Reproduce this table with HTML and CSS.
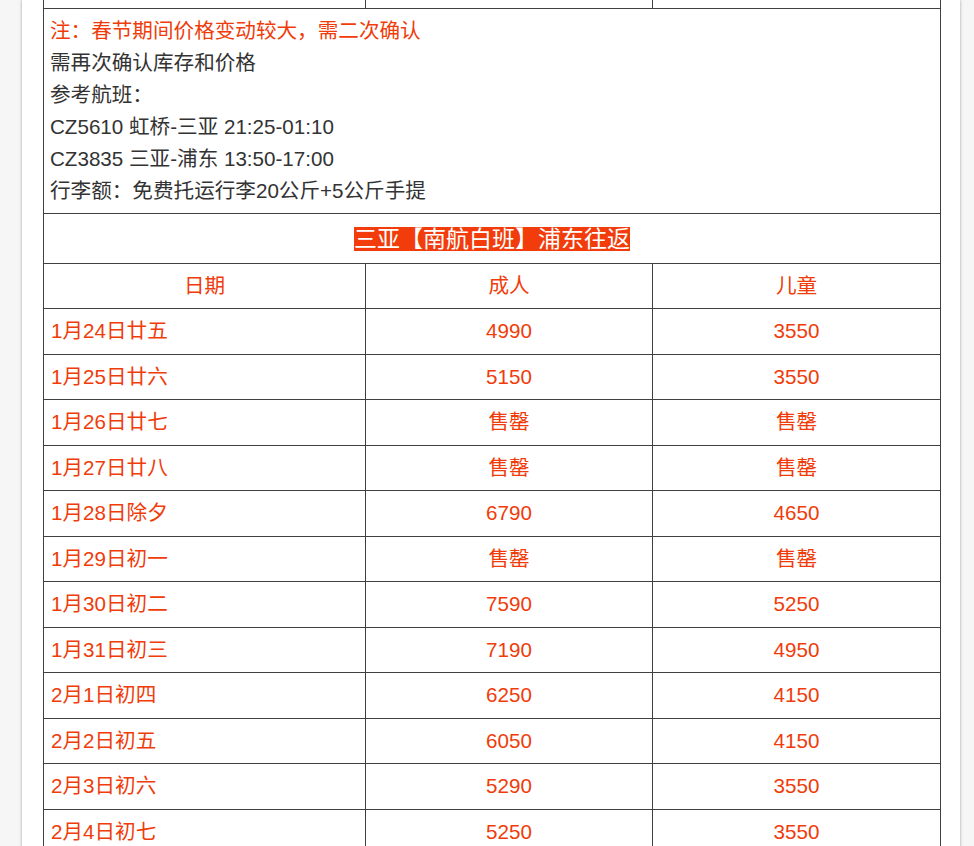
FILE: index.html
```html
<!DOCTYPE html>
<html lang="zh-CN">
<head>
<meta charset="utf-8">
<title>三亚【南航白班】浦东往返</title>
<link rel="stylesheet" href="styles.css">
</head>
<body>
<div class="page">
  <table class="price">
    <colgroup>
      <col class="c1"><col class="c2"><col class="c3">
    </colgroup>
    <tbody>
      <tr class="cut"><td></td><td></td><td></td></tr>
      <tr>
        <td colspan="3" class="notes">
          <div class="red">注：春节期间价格变动较大，需二次确认</div>
          <div>需再次确认库存和价格</div>
          <div>参考航班：</div>
          <div>CZ5610 虹桥-三亚 21:25-01:10</div>
          <div>CZ3835 三亚-浦东 13:50-17:00</div>
          <div>行李额：免费托运行李20公斤+5公斤手提</div>
        </td>
      </tr>
      <tr class="title-row">
        <td colspan="3"><span class="title">三亚【南航白班】浦东往返</span></td>
      </tr>
      <tr class="row head">
        <td class="ctr">日期</td><td class="ctr">成人</td><td class="ctr">儿童</td>
      </tr>
      <tr class="row"><td>1月24日廿五</td><td class="ctr">4990</td><td class="ctr">3550</td></tr>
      <tr class="row"><td>1月25日廿六</td><td class="ctr">5150</td><td class="ctr">3550</td></tr>
      <tr class="row"><td>1月26日廿七</td><td class="ctr">售罄</td><td class="ctr">售罄</td></tr>
      <tr class="row"><td>1月27日廿八</td><td class="ctr">售罄</td><td class="ctr">售罄</td></tr>
      <tr class="row"><td>1月28日除夕</td><td class="ctr">6790</td><td class="ctr">4650</td></tr>
      <tr class="row"><td>1月29日初一</td><td class="ctr">售罄</td><td class="ctr">售罄</td></tr>
      <tr class="row"><td>1月30日初二</td><td class="ctr">7590</td><td class="ctr">5250</td></tr>
      <tr class="row"><td>1月31日初三</td><td class="ctr">7190</td><td class="ctr">4950</td></tr>
      <tr class="row"><td>2月1日初四</td><td class="ctr">6250</td><td class="ctr">4150</td></tr>
      <tr class="row"><td>2月2日初五</td><td class="ctr">6050</td><td class="ctr">4150</td></tr>
      <tr class="row"><td>2月3日初六</td><td class="ctr">5290</td><td class="ctr">3550</td></tr>
      <tr class="row"><td>2月4日初七</td><td class="ctr">5250</td><td class="ctr">3550</td></tr>
    </tbody>
  </table>
</div>
</body>
</html>
```

FILE: styles.css
```css
html, body {
  margin: 0;
  padding: 0;
}
body {
  background: #f6f6f6;
  font-family: "Liberation Sans", "Noto Sans CJK SC", sans-serif;
  color: #333;
  height: 846px;
  overflow: hidden;
}
.page {
  margin-left: 22px;
  width: 917px;
  padding: 0 0 40px 21px;
  background: #fff;
  box-shadow: 0 0 3px rgba(0, 0, 0, 0.35);
  min-height: 900px;
}
.price {
  border-collapse: collapse;
  table-layout: fixed;
  width: 897px;
  border-top-style: hidden;
  font-size: 20.6px;
}
.c1 { width: 322px; }
.c2 { width: 287px; }
.c3 { width: 288px; }
.price td {
  border: 1px solid #404040;
  padding: 0 7px;
}
.cut td {
  height: 8px;
  padding: 0;
}
.price td.notes {
  padding: 6px 6px;
  line-height: 32px;
  color: #333;
}
.red {
  color: #f03c0a;
}
.title-row td {
  height: 49px;
  padding: 0;
  text-align: center;
}
.title {
  display: inline-block;
  background: #f23c0c;
  color: #fff;
  font-size: 23px;
  line-height: 24px;
  height: 24px;
  padding: 0;
  vertical-align: middle;
}
.row td {
  height: 44.5px;
  line-height: 24px;
  color: #f03c0a;
  padding-top: 0;
  padding-bottom: 0;
}
.row.head td {
  height: 44px;
}
.row td.ctr {
  text-align: center;
}
```
